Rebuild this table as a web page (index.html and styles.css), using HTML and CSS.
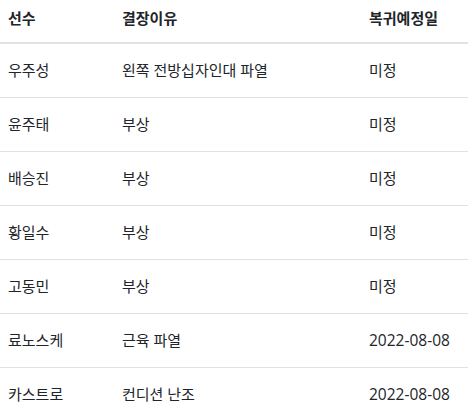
FILE: index.html
```html
<!DOCTYPE html>
<html lang="ko">
<head>
<meta charset="utf-8">
<link rel="stylesheet" href="styles.css">
</head>
<body>
<table class="injury-table">
  <colgroup>
    <col class="col-name">
    <col class="col-reason">
    <col class="col-date">
  </colgroup>
  <thead>
    <tr><th>선수</th><th>결장이유</th><th>복귀예정일</th></tr>
  </thead>
  <tbody>
    <tr><td>우주성</td><td>왼쪽 전방십자인대 파열</td><td>미정</td></tr>
    <tr><td>윤주태</td><td>부상</td><td>미정</td></tr>
    <tr><td>배승진</td><td>부상</td><td>미정</td></tr>
    <tr><td>황일수</td><td>부상</td><td>미정</td></tr>
    <tr><td>고동민</td><td>부상</td><td>미정</td></tr>
    <tr><td>료노스케</td><td>근육 파열</td><td class="date">2022-08-08</td></tr>
    <tr><td>카스트로</td><td>컨디션 난조</td><td class="date">2022-08-08</td></tr>
  </tbody>
</table>
</body>
</html>
```

FILE: styles.css
```css
html, body {
  margin: 0;
  padding: 0;
  background: #fff;
}
body {
  font-family: "Open Sans", "Noto Sans CJK KR", sans-serif;
  font-size: 15px;
  line-height: 21px;
  color: #212529;
}
.injury-table {
  width: 468px;
  border-collapse: collapse;
  table-layout: fixed;
}
.col-name { width: 114px; }
.col-reason { width: 247px; }
.col-date { width: 107px; }
.injury-table th {
  text-align: left;
  font-weight: 700;
  padding: 8px 8px 13px;
  border-bottom: 2px solid #dee2e6;
  white-space: nowrap;
}
.injury-table td {
  padding: 16px 8px;
  border-bottom: 1px solid #dee2e6;
  white-space: nowrap;
}
.injury-table td.date {
  font-size: 15.5px;
}
```
